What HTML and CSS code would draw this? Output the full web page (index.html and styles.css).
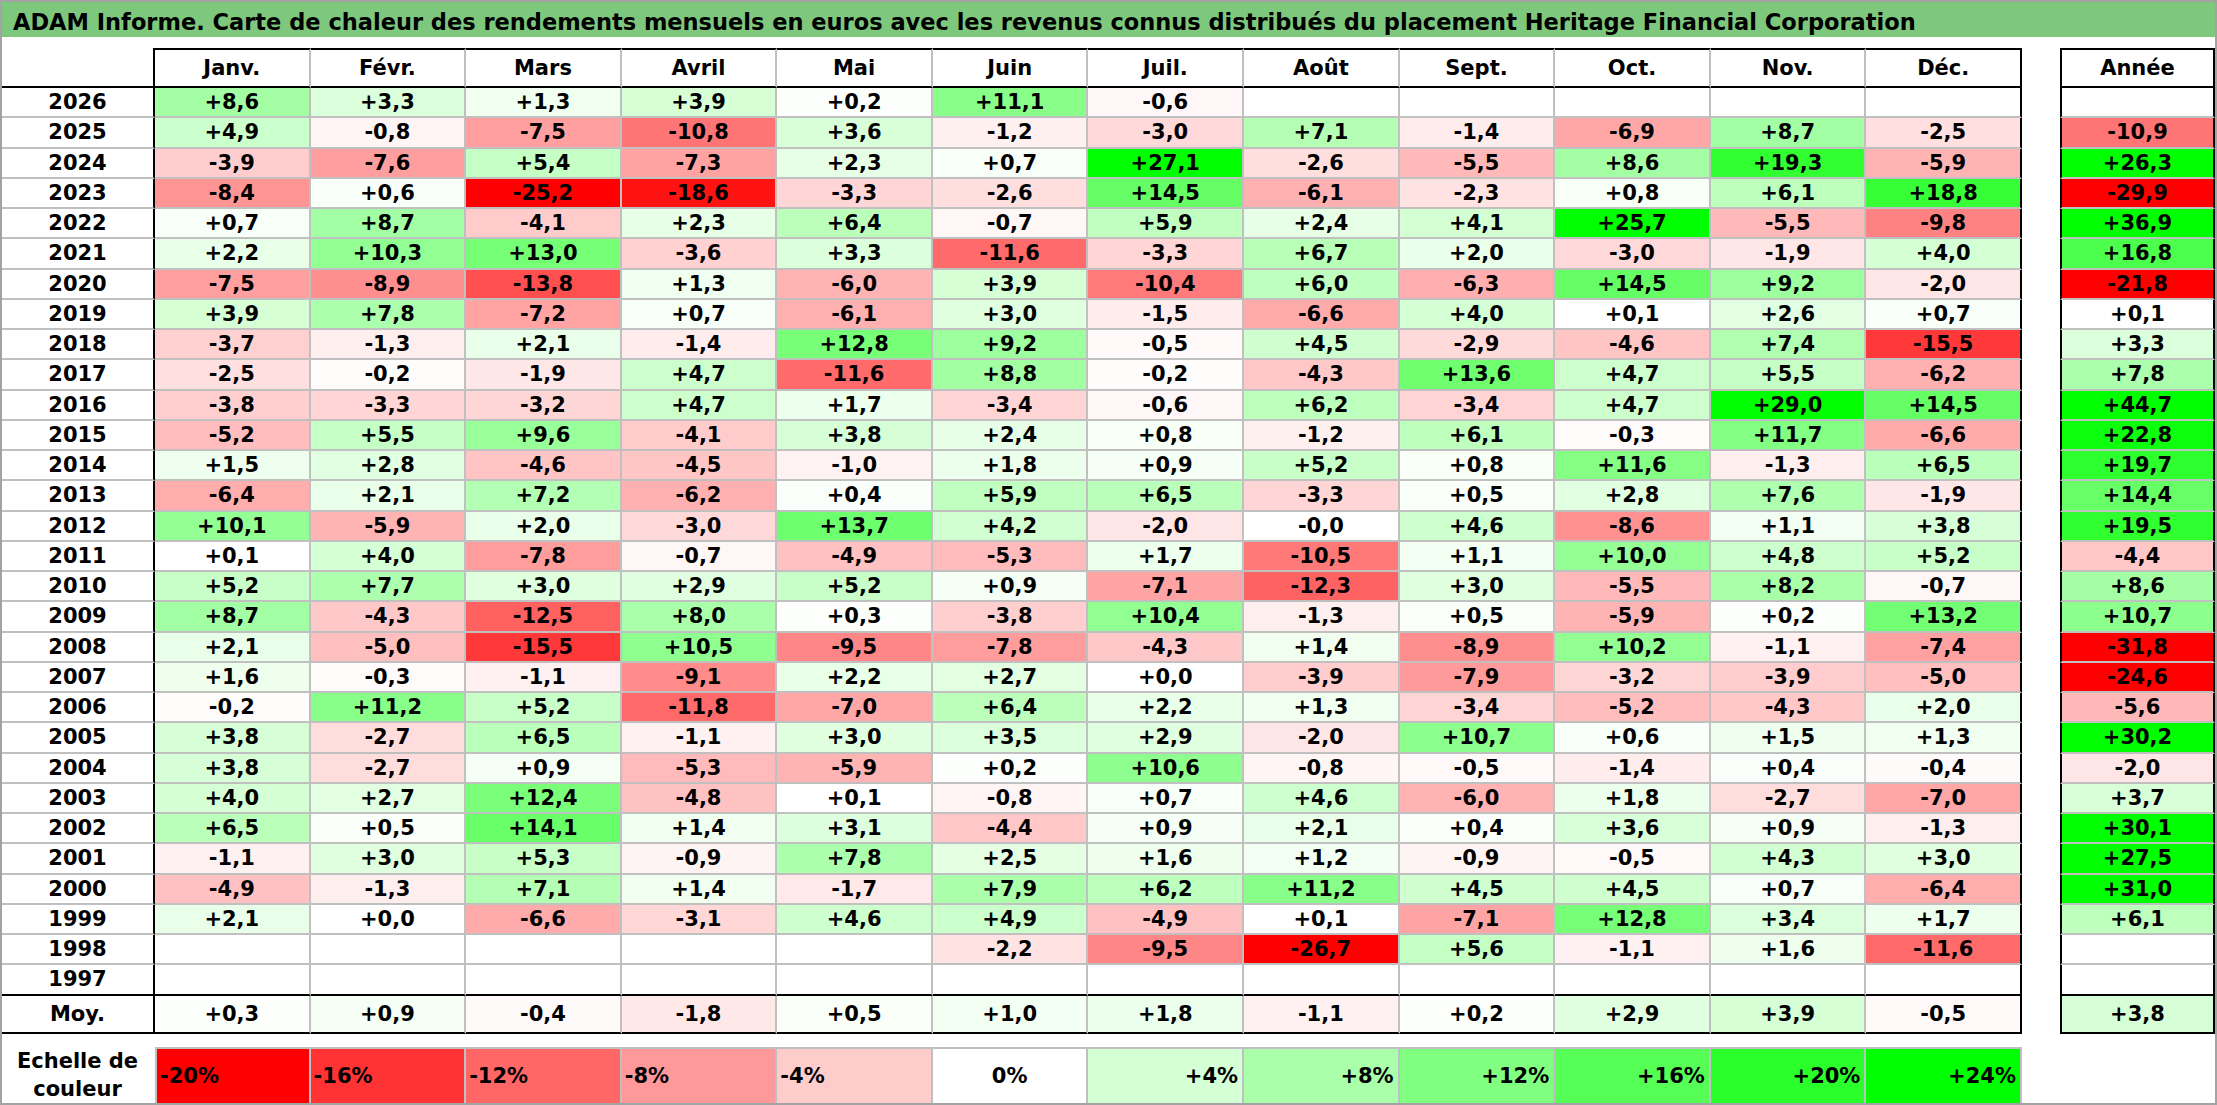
FILE: index.html
```html
<!DOCTYPE html>
<html lang="fr">
<head>
<meta charset="utf-8">
<title>ADAM Informe - Carte de chaleur</title>
<link rel="stylesheet" href="styles.css">
</head>
<body>
<div class="page">
  <div class="title">ADAM Informe. Carte de chaleur des rendements mensuels en euros avec les revenus connus distribués du placement Heritage Financial Corporation</div>
  <div class="board">
    <div class="main" id="main">
      <div class="corner"></div>
      <div class="mh">Janv.</div>
      <div class="mh">Févr.</div>
      <div class="mh">Mars</div>
      <div class="mh">Avril</div>
      <div class="mh">Mai</div>
      <div class="mh">Juin</div>
      <div class="mh">Juil.</div>
      <div class="mh">Août</div>
      <div class="mh">Sept.</div>
      <div class="mh">Oct.</div>
      <div class="mh">Nov.</div>
      <div class="mh last">Déc.</div>
    </div>
    <div class="annual" id="annual">
      <div class="ah">Année</div>
    </div>
  </div>
  <div class="scale">
    <div class="sl">Echelle de<br>couleur</div>
    <div class="lg neg s-20">-20%</div>
    <div class="lg neg s-16">-16%</div>
    <div class="lg neg s-12">-12%</div>
    <div class="lg neg s-8">-8%</div>
    <div class="lg neg s-4">-4%</div>
    <div class="lg zero">0%</div>
    <div class="lg pos s4">+4%</div>
    <div class="lg pos s8">+8%</div>
    <div class="lg pos s12">+12%</div>
    <div class="lg pos s16">+16%</div>
    <div class="lg pos s20">+20%</div>
    <div class="lg pos s24">+24%</div>
  </div>
</div>
<script src="script.js"></script>
</body>
</html>
```

FILE: styles.css
```css
* { box-sizing: border-box; }
html, body { margin: 0; padding: 0; background: #ffffff; }
body {
  font-family: "DejaVu Sans", "Liberation Sans", sans-serif;
  font-weight: bold;
  color: #000000;
}
.page {
  width: 2217px;
  height: 1105px;
  border: 2px solid #a3a3a3;
  overflow: hidden;
}
.title {
  height: 35px;
  background: #7ec87e;
  font-size: 22.5px;
  line-height: 29px;
  padding: 6px 0 0 11px;
  white-space: nowrap;
}
.board {
  display: flex;
  gap: 38px;
  margin: 11px 0 0 -2px;
}
.main {
  width: 2022px;
  display: grid;
  grid-template-columns: 155px repeat(12, 1fr);
  grid-template-rows: 40px repeat(30, 30.25px) 38px;
}
.annual {
  width: 155px;
  display: grid;
  grid-template-columns: 1fr;
  grid-template-rows: 40px repeat(30, 30.25px) 38px;
}
.corner {
  border-right: 2px solid #000;
  border-bottom: 2px solid #000;
}
.mh, .ah, .yl, .dc, .ac, .lg, .sl {
  display: flex;
  align-items: center;
  justify-content: center;
  font-size: 21px;
  white-space: nowrap;
}
.mh {
  border-top: 2px solid #000;
  border-bottom: 2px solid #000;
  border-right: 2px solid #c0c0c0;
}
.mh.last { border-right-color: #000; }
.ah { border: 2px solid #000; }
.yl {
  border-left: 2px solid #000;
  border-right: 2px solid #000;
  border-bottom: 2px solid #c0c0c0;
}
.dc {
  border-right: 2px solid #c0c0c0;
  border-bottom: 2px solid #c0c0c0;
}
.dc.last { border-right-color: #000; }
.ac {
  border-left: 2px solid #000;
  border-right: 2px solid #000;
  border-bottom: 2px solid #c0c0c0;
}
.end { border-bottom-color: #000; }
.avg { border-bottom-color: #000; }

.scale {
  width: 2022px;
  height: 56px;
  margin: 13px 0 0 -2px;
  display: grid;
  grid-template-columns: 155px repeat(12, 1fr);
}
.sl {
  flex-direction: column;
  line-height: 28px;
  text-align: center;
}
.lg {
  border-top: 2px solid #c0c0c0;
  border-right: 2px solid #c0c0c0;
}
.s-20 { border-left: 2px solid #c0c0c0; }
.neg { justify-content: flex-start; padding-left: 3px; }
.pos { justify-content: flex-end; padding-right: 4px; }
.s-20 { background: rgb(255, 0, 0); }
.s-16 { background: rgb(255, 51, 51); }
.s-12 { background: rgb(255, 102, 102); }
.s-8 { background: rgb(255, 153, 153); }
.s-4 { background: rgb(255, 204, 204); }
.zero { background: #ffffff; }
.s4 { background: rgb(213, 255, 213); }
.s8 { background: rgb(170, 255, 170); }
.s12 { background: rgb(128, 255, 128); }
.s16 { background: rgb(85, 255, 85); }
.s20 { background: rgb(43, 255, 43); }
.s24 { background: rgb(0, 255, 0); }
```

FILE: script.js
```js
(function () {
  var rows = [
    ["2026", "+8,6 +3,3 +1,3 +3,9 +0,2 +11,1 -0,6 _ _ _ _ _", "_"],
    ["2025", "+4,9 -0,8 -7,5 -10,8 +3,6 -1,2 -3,0 +7,1 -1,4 -6,9 +8,7 -2,5", "-10,9"],
    ["2024", "-3,9 -7,6 +5,4 -7,3 +2,3 +0,7 +27,1 -2,6 -5,5 +8,6 +19,3 -5,9", "+26,3"],
    ["2023", "-8,4 +0,6 -25,2 -18,6 -3,3 -2,6 +14,5 -6,1 -2,3 +0,8 +6,1 +18,8", "-29,9"],
    ["2022", "+0,7 +8,7 -4,1 +2,3 +6,4 -0,7 +5,9 +2,4 +4,1 +25,7 -5,5 -9,8", "+36,9"],
    ["2021", "+2,2 +10,3 +13,0 -3,6 +3,3 -11,6 -3,3 +6,7 +2,0 -3,0 -1,9 +4,0", "+16,8"],
    ["2020", "-7,5 -8,9 -13,8 +1,3 -6,0 +3,9 -10,4 +6,0 -6,3 +14,5 +9,2 -2,0", "-21,8"],
    ["2019", "+3,9 +7,8 -7,2 +0,7 -6,1 +3,0 -1,5 -6,6 +4,0 +0,1 +2,6 +0,7", "+0,1"],
    ["2018", "-3,7 -1,3 +2,1 -1,4 +12,8 +9,2 -0,5 +4,5 -2,9 -4,6 +7,4 -15,5", "+3,3"],
    ["2017", "-2,5 -0,2 -1,9 +4,7 -11,6 +8,8 -0,2 -4,3 +13,6 +4,7 +5,5 -6,2", "+7,8"],
    ["2016", "-3,8 -3,3 -3,2 +4,7 +1,7 -3,4 -0,6 +6,2 -3,4 +4,7 +29,0 +14,5", "+44,7"],
    ["2015", "-5,2 +5,5 +9,6 -4,1 +3,8 +2,4 +0,8 -1,2 +6,1 -0,3 +11,7 -6,6", "+22,8"],
    ["2014", "+1,5 +2,8 -4,6 -4,5 -1,0 +1,8 +0,9 +5,2 +0,8 +11,6 -1,3 +6,5", "+19,7"],
    ["2013", "-6,4 +2,1 +7,2 -6,2 +0,4 +5,9 +6,5 -3,3 +0,5 +2,8 +7,6 -1,9", "+14,4"],
    ["2012", "+10,1 -5,9 +2,0 -3,0 +13,7 +4,2 -2,0 -0,0 +4,6 -8,6 +1,1 +3,8", "+19,5"],
    ["2011", "+0,1 +4,0 -7,8 -0,7 -4,9 -5,3 +1,7 -10,5 +1,1 +10,0 +4,8 +5,2", "-4,4"],
    ["2010", "+5,2 +7,7 +3,0 +2,9 +5,2 +0,9 -7,1 -12,3 +3,0 -5,5 +8,2 -0,7", "+8,6"],
    ["2009", "+8,7 -4,3 -12,5 +8,0 +0,3 -3,8 +10,4 -1,3 +0,5 -5,9 +0,2 +13,2", "+10,7"],
    ["2008", "+2,1 -5,0 -15,5 +10,5 -9,5 -7,8 -4,3 +1,4 -8,9 +10,2 -1,1 -7,4", "-31,8"],
    ["2007", "+1,6 -0,3 -1,1 -9,1 +2,2 +2,7 +0,0 -3,9 -7,9 -3,2 -3,9 -5,0", "-24,6"],
    ["2006", "-0,2 +11,2 +5,2 -11,8 -7,0 +6,4 +2,2 +1,3 -3,4 -5,2 -4,3 +2,0", "-5,6"],
    ["2005", "+3,8 -2,7 +6,5 -1,1 +3,0 +3,5 +2,9 -2,0 +10,7 +0,6 +1,5 +1,3", "+30,2"],
    ["2004", "+3,8 -2,7 +0,9 -5,3 -5,9 +0,2 +10,6 -0,8 -0,5 -1,4 +0,4 -0,4", "-2,0"],
    ["2003", "+4,0 +2,7 +12,4 -4,8 +0,1 -0,8 +0,7 +4,6 -6,0 +1,8 -2,7 -7,0", "+3,7"],
    ["2002", "+6,5 +0,5 +14,1 +1,4 +3,1 -4,4 +0,9 +2,1 +0,4 +3,6 +0,9 -1,3", "+30,1"],
    ["2001", "-1,1 +3,0 +5,3 -0,9 +7,8 +2,5 +1,6 +1,2 -0,9 -0,5 +4,3 +3,0", "+27,5"],
    ["2000", "-4,9 -1,3 +7,1 +1,4 -1,7 +7,9 +6,2 +11,2 +4,5 +4,5 +0,7 -6,4", "+31,0"],
    ["1999", "+2,1 +0,0 -6,6 -3,1 +4,6 +4,9 -4,9 +0,1 -7,1 +12,8 +3,4 +1,7", "+6,1"],
    ["1998", "_ _ _ _ _ -2,2 -9,5 -26,7 +5,6 -1,1 +1,6 -11,6", "_"],
    ["1997", "_ _ _ _ _ _ _ _ _ _ _ _", "_"],
    ["Moy.", "+0,3 +0,9 -0,4 -1,8 +0,5 +1,0 +1,8 -1,1 +0,2 +2,9 +3,9 -0,5", "+3,8"]
  ];

  function colour(s) {
    if (s === "_") return "";
    var v = parseFloat(s.replace(",", "."));
    var t, c;
    if (v >= 0) {
      t = Math.min(v / 24, 1);
      c = Math.round(255 * (1 - t));
      return "rgb(" + c + ",255," + c + ")";
    }
    t = Math.min(-v / 20, 1);
    c = Math.round(255 * (1 - t));
    return "rgb(255," + c + "," + c + ")";
  }

  function cell(parent, cls, text) {
    var d = document.createElement("div");
    d.className = cls;
    if (text !== "_") {
      d.textContent = text;
      var bg = colour(text);
      if (bg) d.style.background = bg;
    }
    parent.appendChild(d);
    return d;
  }

  var main = document.getElementById("main");
  var annual = document.getElementById("annual");

  rows.forEach(function (r, i) {
    var extra = "";
    if (i === rows.length - 2) extra = " end";
    if (i === rows.length - 1) extra = " avg";
    var y = document.createElement("div");
    y.className = "yl" + extra;
    y.textContent = r[0];
    main.appendChild(y);
    var vals = r[1].split(" ");
    vals.forEach(function (v, j) {
      cell(main, "dc" + (j === 11 ? " last" : "") + extra, v);
    });
    cell(annual, "ac" + extra, r[2]);
  });
})();
```
